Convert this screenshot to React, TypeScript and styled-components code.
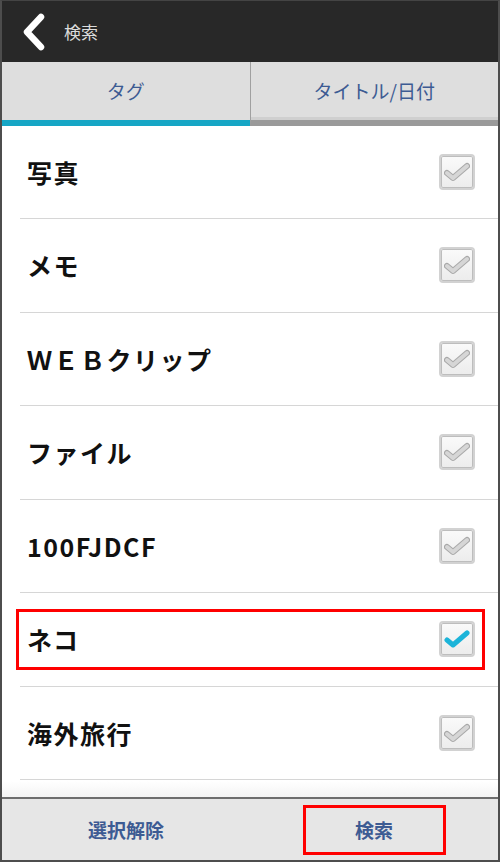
import styled, { createGlobalStyle } from 'styled-components';

const GlobalStyle = createGlobalStyle`
  html, body {
    margin: 0;
    padding: 0;
    background: #fff;
  }
  body {
    font-family: "Noto Sans CJK JP", "Noto Sans", sans-serif;
  }
`;

const Frame = styled.div`
  width: 500px;
  height: 862px;
  box-sizing: border-box;
  display: flex;
  flex-direction: column;
  border: 2px solid #4d4d4d;
  border-top: 1px solid #444;
  background: #fff;
  overflow: hidden;
`;

const Header = styled.header`
  height: 61px;
  flex-shrink: 0;
  display: flex;
  align-items: center;
  background: #282828;
  padding-left: 19px;
  gap: 17px;
`;

const Title = styled.h1`
  margin: 0;
  font-size: 17px;
  font-weight: 400;
  color: #dcdcdc;
`;

const Tabs = styled.nav`
  display: flex;
  flex-shrink: 0;
  background: #dedede;
`;

const Tab = styled.div<{ $active?: boolean }>`
  flex: 1;
  height: 57.5px;
  display: flex;
  align-items: center;
  justify-content: center;
  font-size: 19px;
  color: #3d5b93;
  border-bottom: ${(p) => (p.$active ? '6px solid #16a6c5' : '6px solid #9a9a9a')};
  box-shadow: ${(p) => (p.$active ? 'none' : 'inset 0 -3px 0 #cfcfcf')};
  & + & {
    border-left: 1px solid #a0a0a0;
  }
`;

const List = styled.ul`
  flex: 1;
  margin: 0;
  padding: 0;
  list-style: none;
  overflow: hidden;
  background: linear-gradient(#fff 0, #fff 655px, #f4f4f4 100%);
`;

const Row = styled.li`
  height: 92.5px;
  margin-left: 18px;
  padding: 0 23px 0 7px;
  display: flex;
  align-items: center;
  justify-content: space-between;
  border-bottom: 1px solid #d6d6d6;
  position: relative;
`;

const Label = styled.span`
  font-size: 25px;
  font-weight: 700;
  letter-spacing: 1.5px;
  color: #111;
`;

const Highlight = styled.div`
  position: absolute;
  left: -4px;
  right: 13px;
  top: 16px;
  bottom: 16px;
  border: 3px solid #f00;
  pointer-events: none;
`;

const Box = styled.div`
  width: 32px;
  height: 32px;
  border-radius: 4px;
  border: 2px solid #d2d2d2;
  background: linear-gradient(#fafafa, #ececec);
  box-shadow: inset 0 0 0 1px #bdbdbd;
  display: flex;
  align-items: center;
  justify-content: center;
`;

const Footer = styled.footer`
  height: 61px;
  flex-shrink: 0;
  display: flex;
  background: #e6e6e6;
  border-top: 2px solid #6e6e6e;
`;

const FootButton = styled.div<{ $marked?: boolean }>`
  flex: 1;
  display: flex;
  align-items: center;
  justify-content: center;
  font-size: 19px;
  font-weight: 700;
  color: #3d5b93;
  span {
    display: flex;
    align-items: center;
    justify-content: center;
    width: ${(p) => (p.$marked ? '137px' : 'auto')};
    height: ${(p) => (p.$marked ? '44px' : 'auto')};
    border: ${(p) => (p.$marked ? '3px solid #f00' : 'none')};
  }
`;

function BackIcon() {
  return (
    <svg width="26" height="38" viewBox="0 0 26 38">
      <path d="M20 4 L6 19 L20 34" fill="none" stroke="#fff" strokeWidth="6.5" strokeLinecap="round" strokeLinejoin="round" />
    </svg>
  );
}

function CheckBox({ checked }: { checked?: boolean }) {
  return (
    <Box>
      <svg width="26" height="22" viewBox="0 0 26 22">
        {checked ? (
          <path d="M3 12 L9 17 L23 5" fill="none" stroke="#1cb4d9" strokeWidth="5" strokeLinecap="round" strokeLinejoin="round" />
        ) : (
          <>
            <path d="M3 12 L9 17 L23 5" fill="none" stroke="#a8a8a8" strokeWidth="6" strokeLinecap="round" strokeLinejoin="round" />
            <path d="M3 12 L9 17 L23 5" fill="none" stroke="#d6d6d6" strokeWidth="4" strokeLinecap="round" strokeLinejoin="round" />
          </>
        )}
      </svg>
    </Box>
  );
}

const tags = [
  { name: '写真' },
  { name: 'メモ' },
  { name: 'ＷＥＢクリップ' },
  { name: 'ファイル' },
  { name: '100FJDCF' },
  { name: 'ネコ', checked: true },
  { name: '海外旅行' },
];

export default function App() {
  return (
    <>
      <GlobalStyle />
      <Frame>
        <Header>
          <BackIcon />
          <Title>検索</Title>
        </Header>
        <Tabs>
          <Tab $active>タグ</Tab>
          <Tab>タイトル/日付</Tab>
        </Tabs>
        <List>
          {tags.map((t) => (
            <Row key={t.name}>
              <Label>{t.name}</Label>
              <CheckBox checked={t.checked} />
              {t.checked && <Highlight />}
            </Row>
          ))}
        </List>
        <Footer>
          <FootButton>
            <span>選択解除</span>
          </FootButton>
          <FootButton $marked>
            <span>検索</span>
          </FootButton>
        </Footer>
      </Frame>
    </>
  );
}
